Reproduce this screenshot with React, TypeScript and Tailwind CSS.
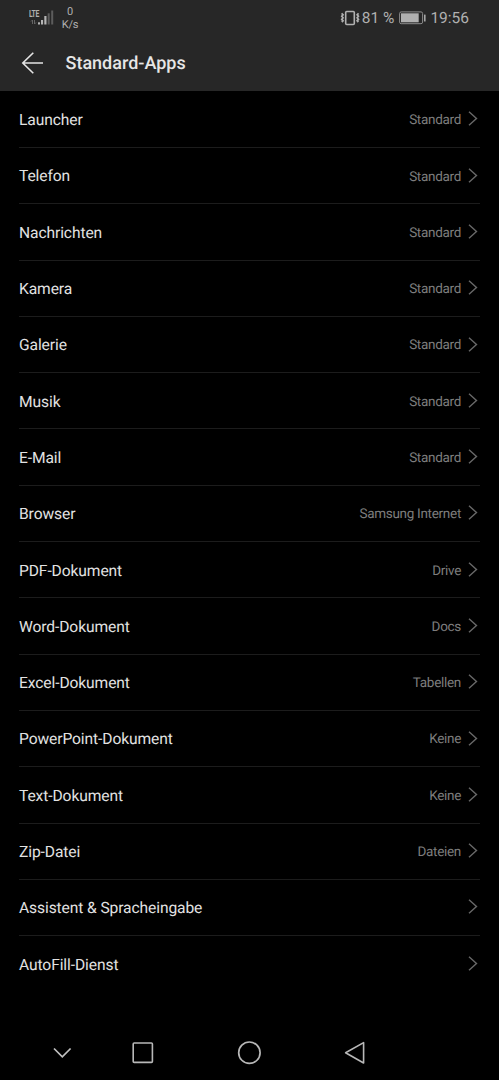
import clsx from "clsx"

interface DefaultApp {
  label: string
  value?: string
}

const defaultApps: DefaultApp[] = [
  { label: "Launcher", value: "Standard" },
  { label: "Telefon", value: "Standard" },
  { label: "Nachrichten", value: "Standard" },
  { label: "Kamera", value: "Standard" },
  { label: "Galerie", value: "Standard" },
  { label: "Musik", value: "Standard" },
  { label: "E-Mail", value: "Standard" },
  { label: "Browser", value: "Samsung Internet" },
  { label: "PDF-Dokument", value: "Drive" },
  { label: "Word-Dokument", value: "Docs" },
  { label: "Excel-Dokument", value: "Tabellen" },
  { label: "PowerPoint-Dokument", value: "Keine" },
  { label: "Text-Dokument", value: "Keine" },
  { label: "Zip-Datei", value: "Dateien" },
  { label: "Assistent & Spracheingabe" },
  { label: "AutoFill-Dienst" },
]

function SignalIcon() {
  return (
    <svg width="25" height="15" viewBox="0 0 25 15" fill="#b4b4b4">
      {/* data arrows */}
      <path d="M3.5 10v4M2 11.5l1.5-1.5M5.5 10v4M5.5 14l1.5-1.5" fill="none" stroke="#6b6b6b" strokeWidth="0.9" />
      <rect x="9" y="12.3" width="2" height="2.2" />
      <rect x="12" y="10" width="2.1" height="4.5" />
      <rect x="15.3" y="6" width="2.2" height="8.5" />
      <rect x="18.7" y="3.3" width="2" height="11.2" fill="#5c5c5c" />
      <rect x="22.2" y="0.5" width="2" height="14" fill="#5c5c5c" />
    </svg>
  )
}

function VibrateIcon() {
  return (
    <svg width="20" height="16" viewBox="0 0 20 16" fill="none" stroke="#b0b0b0">
      <rect x="5.7" y="1.5" width="8.6" height="13" rx="1" strokeWidth="1.6" />
      <path d="M1.6 3.3l1.4 1.4-1.2 1.5 1.2 1.6-1.2 1.6 1.2 1.4-1.2 1.2M18.6 3.3l-1.4 1.4 1.2 1.5-1.2 1.6 1.2 1.6-1.2 1.4 1.2 1.2" strokeWidth="1.8" />
    </svg>
  )
}

function BatteryIcon() {
  return (
    <svg width="28" height="14" viewBox="0 0 28 14">
      <rect x="0.6" y="0.9" width="23" height="11.8" rx="1.6" fill="none" stroke="#8c8c8c" strokeWidth="1" />
      <rect x="2" y="2.3" width="17.7" height="9" fill="#b0b0b0" />
      <rect x="25" y="3.4" width="1.6" height="7" rx="0.5" fill="#a6a6a6" />
    </svg>
  )
}

function StatusBar() {
  return (
    <div className="flex h-[35px] justify-between pr-[30px] pl-[29px] text-[#b0b0b0]">
      <div className="flex">
        <div className="w-6 pt-[9.5px]">
          <div className="h-0 w-0">
            <p className="origin-left scale-x-[0.68] text-[10px] leading-[9px] font-bold tracking-[-0.5px]">LTE</p>
          </div>
          <SignalIcon />
        </div>
        <div className="ml-[9px] flex w-4 flex-col items-center pt-[6px] text-[11px] leading-[12.5px] tracking-[-0.2px]">
          <span>0</span>
          <span className="whitespace-nowrap">K/s</span>
        </div>
      </div>
      <div className="flex items-center pt-px text-[15.5px] leading-none">
        <VibrateIcon />
        <span className="ml-[2px] pt-px">81 %</span>
        <span className="ml-[5px]">
          <BatteryIcon />
        </span>
        <span className="ml-[3px] pt-px">19:56</span>
      </div>
    </div>
  )
}

function Header() {
  return (
    <div className="flex h-14 items-center pl-[21px]">
      <svg width="24" height="24" viewBox="0 0 24 24" fill="none" stroke="#e4e4e4" strokeWidth="1.6">
        <path d="M12.3 1.8L1.8 12l10.5 10.2M1.8 12H22" />
      </svg>
      <h1 className="ml-[20.5px] pt-px text-[18px] font-medium text-[#e6e6e6]">Standard-Apps</h1>
    </div>
  )
}

function AppRow({ app, last }: { app: DefaultApp; last: boolean }) {
  return (
    <li className={clsx("flex h-[56.3px] items-center border-b", last ? "border-transparent" : "border-[#1c1c1c]")}>
      <span className="flex-1 pt-[3px] text-[15.6px] tracking-[-0.1px] text-[#e2e2e2]">{app.label}</span>
      {app.value && <span className="pt-[2px] text-[13.5px] tracking-[-0.3px] text-[#7d7d7d]">{app.value}</span>}
      <svg className="ml-[7px]" width="12" height="16" viewBox="0 0 12 16" fill="none" stroke="#686868" strokeWidth="1.4">
        <path d="M1 .8l7.5 6.7L1 14.3" />
      </svg>
    </li>
  )
}

function NavigationBar() {
  return (
    <div className="flex h-[54px] items-center pl-[52px]">
      <svg width="20" height="24" viewBox="0 0 20 24" fill="none" stroke="#c0c0c0" strokeWidth="1.7">
        <path d="M2 7.5l8.3 8.3 8.3-8.3" />
      </svg>
      <svg className="ml-[60px]" width="22" height="24" viewBox="0 0 22 24" fill="none" stroke="#b8b8b8" strokeWidth="1.6">
        <rect x="1.2" y="2" width="19.2" height="19.4" rx="1" />
      </svg>
      <svg className="ml-[83px]" width="24" height="24" viewBox="0 0 24 24" fill="none" stroke="#b8b8b8" strokeWidth="1.7">
        <circle cx="12.4" cy="11.7" r="10.7" />
      </svg>
      <svg className="ml-[83px]" width="22" height="24" viewBox="0 0 22 24" fill="none" stroke="#b8b8b8" strokeWidth="1.6" strokeLinejoin="round">
        <path d="M19.6 1.6v20.4L1.6 11.8z" />
      </svg>
    </div>
  )
}

export default function App() {
  return (
    <div className="flex h-[1080px] w-[499px] flex-col overflow-hidden bg-black font-['Roboto',sans-serif] [text-rendering:geometricPrecision]">
      <div className="bg-[#272727]">
        <StatusBar />
        <Header />
      </div>
      <ul className="flex-1 px-[19px] pt-[0.7px]">
        {defaultApps.map((app, index) => (
          <AppRow key={app.label} app={app} last={index === defaultApps.length - 1} />
        ))}
      </ul>
      <NavigationBar />
    </div>
  )
}
